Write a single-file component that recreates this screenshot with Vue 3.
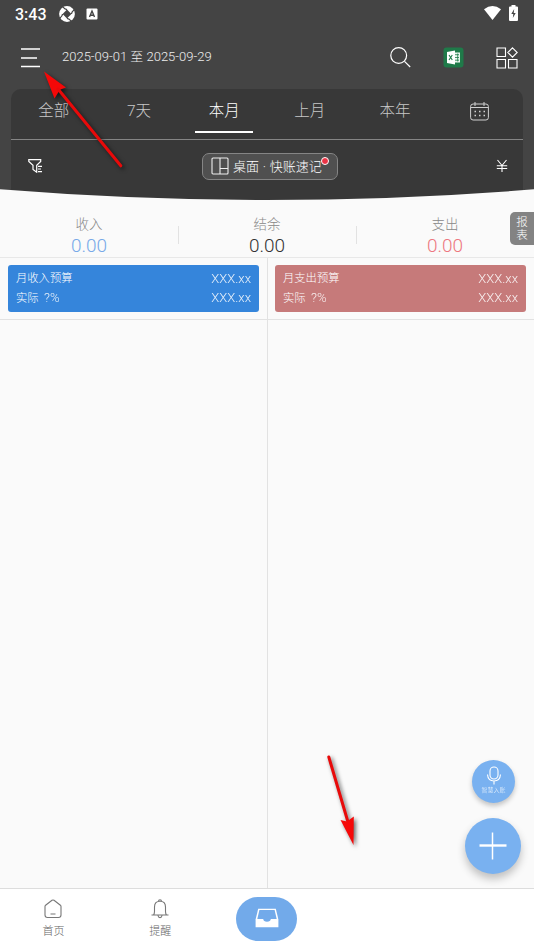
<script setup>
const tabs = ['全部', '7天', '本月', '上月', '本年']
const stats = [
  { label: '收入', value: '0.00', tone: 'blue' },
  { label: '结余', value: '0.00', tone: 'dark' },
  { label: '支出', value: '0.00', tone: 'red' },
]
const budgets = [
  { title: '月收入预算', tone: 'income' },
  { title: '月支出预算', tone: 'expense' },
]
</script>

<template>
  <div class="screen">
    <header class="top">
      <div class="status">
        <span class="time">3:43</span>
        <svg class="swirl" width="16" height="16" viewBox="0 0 16 16">
          <circle cx="8" cy="8" r="7.900" fill="#fff" />
          <path d="M8 3.600 12.400 8 8 12.400 3.600 8Z" fill="#444" />
          <path d="M8 3.600Q5.500 3.200 4 1M12.400 8Q12.800 5.500 15 4M8 12.400Q10.500 12.800 12 15M3.600 8Q3.200 10.500 1 12" fill="none" stroke="#444" stroke-width="1.300" />
        </svg>
        <svg class="abadge" width="12" height="12" viewBox="0 0 12 12">
          <rect x=".5" y=".5" width="11" height="11" rx="1" fill="#fff" />
          <path d="M3.500 9 6 3 8.500 9M4.300 7.200H7.700" fill="none" stroke="#444" stroke-width="1.4" />
        </svg>
        <svg class="wifi" width="17" height="14" viewBox="0 0 17 14">
          <path d="M0 3.200Q8.500-3 17 3.200L8.500 14Z" fill="#fff" />
        </svg>
        <svg class="battery" width="9" height="16" viewBox="0 0 9 16">
          <path d="M2.500 0H6.500V1.500H8Q9 1.500 9 2.500V15Q9 16 8 16H1Q0 16 0 15V2.500Q0 1.500 1 1.500H2.500Z" fill="#fff" />
          <path d="M5.200 4 2.300 9H4.300L3.800 13 6.700 8H4.700Z" fill="#444" />
        </svg>
      </div>

      <div class="bar">
        <svg class="menu" width="20" height="20" viewBox="0 0 20 20">
          <path d="M0 1H19M0 10H16M0 18.500H19" stroke="#fff" stroke-width="1.500" />
        </svg>
        <span class="range">2025-09-01 至 2025-09-29</span>
        <svg class="search" width="21" height="21" viewBox="0 0 21 21" fill="none" stroke="#fff" stroke-width="1.200">
          <circle cx="8.700" cy="8.500" r="7.900" /><path d="M14.500 14.300 20.200 20" />
        </svg>
        <svg class="excel" width="21" height="21" viewBox="0 0 21 21">
          <rect x=".5" y=".5" width="20" height="20" rx="3" fill="#1f7a49" />
          <path d="M11.500 5.500H17V15.500H11.500Z" fill="#eaf6ee" />
          <path d="M12 7.700H16M12 10.500H16M12 13.200H16M14.700 6.500V14.500" stroke="#1f7a49" stroke-width=".8" />
          <path d="M4 5 12 3.500V17.500L4 16Z" fill="#fff" />
          <path d="M6 8 9.300 13M9.300 8 6 13" stroke="#1f7a49" stroke-width="1.100" />
        </svg>
        <svg class="grid" width="22" height="22" viewBox="0 0 22 22" fill="none" stroke="#fff" stroke-width="1.100">
          <path d="M1 1H9.500V9.500H1ZM1 12.500H9.500V21H1ZM12.500 12.500H21V21H12.500ZM16.500 .8 21.200 5.500 16.500 10.200 11.800 5.500Z" />
        </svg>
      </div>

      <div class="panel">
        <nav class="tabs">
          <div v-for="t in tabs" :key="t" class="tab" :class="{ active: t === '本月' }">{{ t }}</div>
          <div class="tab">
            <svg class="calendar" width="19" height="19" viewBox="0 0 19 19" fill="none" stroke="#d0d0d0">
              <rect x=".6" y="2" width="17.800" height="16" rx="2.500" />
              <path d="M1 5.500H18M5 0V4M14 0V4" />
              <path d="M4.500 9.500H15M4.500 13.500H15" stroke-width="1.500" stroke-dasharray="1.500 3" />
            </svg>
          </div>
        </nav>
        <div class="tools">
          <svg class="filter" width="15" height="14" viewBox="0 0 15 14" fill="none" stroke="#fff" stroke-width="1.200">
            <path d="M.8.700H12.700V2.400L8.700 6.200V13.200L5 10.500V6.200L.8 2.400ZM10 7.300H14M10 10H13M10 12.700H14" />
          </svg>
          <div class="pill">
            <svg width="18" height="18" viewBox="0 0 18 18" fill="none" stroke="#eee" stroke-width="1.100">
              <rect x="1" y="1" width="16" height="16" rx="1" /><path d="M9 1V17M9 11.500H17" />
            </svg>
            <span>桌面 · 快账速记</span>
            <i class="dot"></i>
          </div>
          <svg class="yen" width="12" height="14" viewBox="0 0 12 14" fill="none" stroke="#fff" stroke-width="1.100">
            <path d="M1.500 1 6 6.500 10.500 1M6 6.500V13M.8 6.800H11.200M.8 9.500H11.200" />
          </svg>
        </div>
      </div>
      <svg class="curve" width="534" height="13" viewBox="0 0 534 13">
        <path d="M0 1.300Q267 22.700 534 1.300V13H0Z" fill="#fafafa" />
      </svg>
    </header>

    <section class="stats">
      <div v-for="s in stats" :key="s.label" class="stat">
        <span class="label">{{ s.label }}</span>
        <span class="value" :class="s.tone">{{ s.value }}</span>
      </div>
      <div class="report"><span>报</span><span>表</span></div>
    </section>

    <main class="columns">
      <div v-for="b in budgets" :key="b.title" class="column">
        <div class="budget-wrap">
          <div class="budget" :class="b.tone">
            <div class="row"><span>{{ b.title }}</span><span class="amount">XXX.xx</span></div>
            <div class="row"><span>实际&nbsp; <span class="pct">?%</span></span><span class="amount">XXX.xx</span></div>
          </div>
        </div>
      </div>
    </main>

    <footer class="nav">
      <div class="item">
        <svg width="18" height="20" viewBox="0 0 18 20" fill="none" stroke="#777" stroke-width="1.100">
          <path d="M1 7.500Q1 6.700 1.600 6.200L8 1.300Q9 .600 10 1.300L16.400 6.200Q17 6.700 17 7.500V16Q17 18.500 14.500 18.500H3.500Q1 18.500 1 16ZM6.500 15H11.500" />
        </svg>
        <span>首页</span>
      </div>
      <div class="item">
        <svg width="18" height="20" viewBox="0 0 18 20" fill="none" stroke="#777" stroke-width="1.100">
          <path d="M.5 16H17.500M2.500 16Q3.500 14.500 3.500 12.500V8Q3.500 2.300 9 2.300T14.500 8V12.500Q14.500 14.500 15.500 16M7.500 2.300Q7.500.700 9 .700T10.500 2.300M7 16.500Q7.300 18.600 9 18.600T11 16.500" />
        </svg>
        <span>提醒</span>
      </div>
      <div class="item">
        <div class="inbox">
          <svg width="24" height="20" viewBox="0 0 24 20">
            <path d="M3.200.700H20.800L23.400 11.500V19.300H.6V11.500Z" fill="#fff" />
            <path d="M4.400 2H19.600L21.700 11H15.800Q15.500 13.800 12 13.800T8.200 11H2.300Z" fill="#72aaea" />
          </svg>
        </div>
      </div>
      <div class="item"></div>
      <div class="item"></div>
    </footer>

    <div class="fab mic">
      <svg width="16" height="19" viewBox="0 0 16 19" fill="none" stroke="#fff" stroke-width="1.100">
        <rect x="4" y="1" width="8" height="12" rx="4" /><path d="M1.500 8.500Q2 15 8 15T14.500 8.500M8 15V18.500" />
      </svg>
      <span>智慧入账</span>
    </div>
    <div class="fab plus">
      <svg width="28" height="28" viewBox="0 0 28 28" stroke="#fff">
        <path d="M.5 13.500H27.500" stroke-width="2.400" /><path d="M13.500 .500V27.500" stroke-width="1.500" />
      </svg>
    </div>

    <svg class="arrows" width="534" height="950" viewBox="0 0 534 950">
      <path d="M44 71.500 66 87.500 60.500 89.500 58.500 92 54.500 98.500Z" class="arrow" />
      <path d="M120.800 165.800 58 89" class="shaft" />
      <path d="M328.800 757 348 822" class="shaft" />
      <path d="M353.500 845 340.500 820 347 821.500 353.800 816.500Z" class="arrow" />
    </svg>
  </div>
</template>

<style>
body { margin: 0; }
</style>

<style scoped>
.screen { position: relative; width: 534px; height: 950px; overflow: hidden; display: flex; flex-direction: column; background: #fafafa; font-family: Roboto, "Noto Sans CJK SC", sans-serif; font-weight: 300; }
svg { display: block; flex: none; }
.top { position: relative; box-sizing: border-box; height: 201px; background: #444; display: flex; flex-direction: column; }
.status { height: 28px; display: flex; align-items: center; padding: 0 16px 0 15px; color: #fff; }
.time { width: 44px; font-size: 16px; font-weight: 500; }
.abadge { margin-left: 11px; }
.wifi { margin: -2px 0 0 auto; }
.battery { margin: -3px 0 0 8px; }
.bar { height: 61px; box-sizing: border-box; display: flex; align-items: center; padding: 0 16px 2px 21px; }
.range { margin: 0 0 1px 21px; width: 160px; white-space: nowrap; color: #eee; font-size: 13px; line-height: 20px; }
.search { margin-left: auto; }
.excel { margin-left: 32px; }
.grid { margin-left: 32px; }
.panel { height: 112px; margin: 0 11px; background: #383838; border-radius: 10px 10px 0 0; }
.tabs { height: 50px; display: grid; grid-template-columns: repeat(6, 1fr); border-bottom: 1px solid #858585; }
.tab { display: flex; flex-direction: column; align-items: center; color: #c8c8c8; font-size: 15.500px; line-height: 45px; }
.tab.active { color: #fff; }
.tab.active::after { content: ""; width: 58px; height: 2px; margin-top: -3px; background: #fff; }
.calendar { margin: 13px 1px 0 0; }
.tools { height: 54px; display: flex; align-items: center; justify-content: space-between; padding: 0 15px 0 17px; }
.filter, .yen { margin-top: -2px; }
.pill { position: relative; top: -1px; box-sizing: border-box; width: 136px; height: 27px; margin-left: 1px; display: flex; align-items: center; gap: 4px; padding-left: 8px; border: 1px solid #858585; border-radius: 7px; background: #505050; color: #fff; font-size: 13px; white-space: nowrap; }
.pill span { margin-top: -2px; word-spacing: .6px; }
.dot { position: absolute; left: 118px; top: 3px; width: 6px; height: 6px; border: 1.500px solid #fff; border-radius: 50%; background: #ec3345; }
.curve { position: absolute; left: 0; bottom: 0; }
.stats { position: relative; height: 57px; box-sizing: border-box; display: grid; grid-template-columns: repeat(3, 1fr); border-bottom: 1px solid #e8e8e8; }
.stat { position: relative; display: flex; flex-direction: column; align-items: center; padding-top: 13px; }
.stat:nth-child(-n+2)::after { content: ""; position: absolute; right: -1px; top: 25px; width: 1px; height: 18px; background: #e2e2e2; }
.label { color: #888; font-size: 13.500px; line-height: 20px; }
.value { font-size: 19px; line-height: 24px; }
.blue { color: #78a9e8; }
.dark { color: #333; }
.red { color: #ed7780; }
.report { position: absolute; right: 0; top: 11px; width: 24px; height: 33px; box-sizing: border-box; display: flex; flex-direction: column; align-items: center; justify-content: center; border-radius: 5px 0 0 5px; background: #838383; color: #fff; font-size: 11.500px; line-height: 12.500px; }
.columns { flex: 1; display: grid; grid-template-columns: 1fr 1fr; }
.column + .column { box-shadow: inset 1px 0 #e2e2e2; }
.budget-wrap { height: 62px; box-sizing: border-box; padding: 7px 8px; border-bottom: 1px solid #e2e2e2; }
.budget { height: 47px; box-sizing: border-box; padding: 4px 8px; border-radius: 3px; color: #fff; font-size: 11.300px; line-height: 19px; }
.income { background: #3585db; }
.expense { background: #c67a7a; }
.row { height: 19px; display: flex; justify-content: space-between; white-space: pre; }
.amount { font-size: 13px; opacity: .88; }
.pct { font-size: 13px; opacity: .85; }
.nav { height: 62px; box-sizing: border-box; display: grid; grid-template-columns: repeat(5, 1fr); border-top: 1px solid #ddd; background: #fff; }
.item { display: flex; flex-direction: column; align-items: center; padding-top: 10px; color: #666; font-size: 11px; line-height: 16px; }
.item span { margin-top: 5px; }
.inbox { width: 61px; height: 44px; margin-top: -2px; display: flex; align-items: center; justify-content: center; border-radius: 22px; background: #72aaea; }
.inbox svg { margin-top: -2px; }
.fab { position: absolute; display: flex; flex-direction: column; align-items: center; border-radius: 50%; background: #79b1f0; color: #fff; }
.mic { left: 472px; top: 760px; width: 43px; height: 43px; box-shadow: 0 3px 5px rgba(0, 0, 0, .22); }
.mic svg { margin-top: 6px; }
.mic span { font-size: 6px; line-height: 10px; opacity: .85; }
.plus { left: 465px; top: 818px; width: 56px; height: 56px; justify-content: center; box-shadow: 0 5px 8px rgba(0, 0, 0, .24); }
.arrows { position: absolute; left: 0; top: 0; pointer-events: none; filter: drop-shadow(2px 2px 2px rgba(0, 0, 0, .6)); }
.arrow { fill: #f50808; }
.shaft { fill: none; stroke: #e80a0a; stroke-width: 3; stroke-linecap: round; }
</style>
